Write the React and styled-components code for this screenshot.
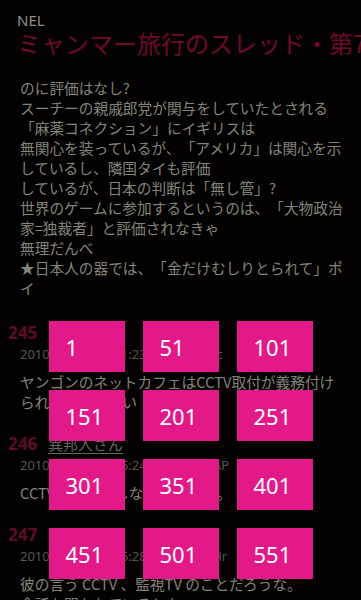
import React from "react";
import styled, { createGlobalStyle } from "styled-components";

const Global = createGlobalStyle`
  html, body { margin: 0; padding: 0; background: #030102; overflow: hidden; }
  body { width: 361px; height: 600px; }
  #root { width: 361px; height: 600px; position: relative; overflow: hidden; }
`;

const Page = styled.div`
  width: 361px;
  height: 600px;
  background: #030102;
  overflow: hidden;
  font-family: "Noto Sans CJK JP", "Noto Sans", sans-serif;
  text-spacing-trim: space-all;
`;

const Header = styled.header`
  padding: 12px 0 0 17px;
  white-space: nowrap;
`;

const AppName = styled.div`
  font-family: "Noto Sans", "Open Sans", sans-serif;
  font-size: 15px;
  line-height: 16px;
  color: #8e9088;
`;

const Title = styled.h1`
  margin: 0;
  font-family: "Noto Sans CJK JP", sans-serif;
  font-weight: 400;
  font-size: 24px;
  line-height: 30px;
  color: #6f0a2e;
`;

const Body = styled.div`
  margin: ${(p) => p.$top || 0}px 0 0 20px;
  font-size: 14.7px;
  line-height: 20px;
  color: #83857a;
`;

const Line = styled.div`
  white-space: nowrap;
`;

const Post = styled.section`
  margin-top: ${(p) => p.$top}px;
`;

const PostHead = styled.div`
  display: flex;
  align-items: center;
  height: 22px;
  white-space: nowrap;
`;

const PostNum = styled.span`
  width: 48px;
  padding-left: 8px;
  box-sizing: border-box;
  font-family: "Noto Sans", sans-serif;
  font-weight: 700;
  font-size: 17px;
  color: #5e0b29;
`;

const Name = styled.span`
  font-size: 15px;
  color: #66665f;
  text-decoration: ${(p) => (p.$underline ? "underline" : "none")};
  text-underline-offset: 3px;
`;

const DateLine = styled.div`
  margin: 1px 0 0 20px;
  font-family: "Noto Sans", "Noto Sans CJK JP", sans-serif;
  font-size: 13px;
  line-height: 20px;
  color: #56574f;
  white-space: nowrap;
`;

const Overlay = styled.div`
  position: absolute;
  inset: 0;
  display: flex;
  flex-direction: column;
  justify-content: flex-end;
  align-items: center;
  padding-bottom: 21px;
  box-sizing: border-box;
`;

const Grid = styled.div`
  display: grid;
  grid-template-columns: repeat(3, 76px);
  grid-auto-rows: 51px;
  column-gap: 18px;
  row-gap: 18px;
`;

const Tile = styled.div`
  background: #e3198a;
  color: #ffffff;
  font-family: "Noto Sans", "Open Sans", sans-serif;
  font-size: 22px;
  line-height: 22px;
  padding: 15px 0 0 17px;
  box-sizing: border-box;
`;

const intro = [
  "のに評価はなし?",
  "スーチーの親戚郎党が関与をしていたとされる",
  "「麻薬コネクション」にイギリスは",
  "無関心を装っているが、「アメリカ」は関心を示",
  "しているし、隣国タイも評価",
  "しているが、日本の判断は「無し管」?",
  "世界のゲームに参加するというのは、「大物政治",
  "家=独裁者」と評価されなきゃ",
  "無理だんべ",
  "★日本人の器では、「金だけむしりとられて」ポ",
  "イ",
];

const posts = [
  {
    num: 245,
    name: "名無しさん",
    underline: false,
    date: "2010/06/04(金) 01:23:31 ID:Zq5Kc",
    lines: ["ヤンゴンのネットカフェはCCTV取付が義務付け", "られているらしい"],
    top: 23,
  },
  {
    num: 246,
    name: "異邦人さん",
    underline: true,
    date: "2010/06/04(金) 06:24:10 ID:Mb0AP",
    lines: ["CCTVの設置はしなきゃならん。"],
    top: 20,
  },
  {
    num: 247,
    name: "名無しさん",
    underline: false,
    date: "2010/06/04(金) 06:28:52 ID:Wk9Hr",
    lines: ["彼の言う CCTV 、監視TV のことだろうな。", "会話も聞かれているとか"],
    top: 20,
  },
];

const pages = [1, 51, 101, 151, 201, 251, 301, 351, 401, 451, 501, 551];

export default function App() {
  return (
    <>
      <Global />
      <Page>
        <Header>
          <AppName>NEL</AppName>
          <Title>ミャンマー旅行のスレッド・第7部</Title>
        </Header>
        <Body $top={20}>
          {intro.map((l, i) => (
            <Line key={i}>{l}</Line>
          ))}
        </Body>
        {posts.map((p) => (
          <Post key={p.num} $top={p.top}>
            <PostHead>
              <PostNum>{p.num}</PostNum>
              <Name $underline={p.underline}>{p.name}</Name>
            </PostHead>
            <DateLine>{p.date}</DateLine>
            <Body $top={8}>
              {p.lines.map((l, i) => (
                <Line key={i}>{l}</Line>
              ))}
            </Body>
          </Post>
        ))}
      </Page>
      <Overlay>
        <Grid>
          {pages.map((n) => (
            <Tile key={n}>{n}</Tile>
          ))}
        </Grid>
      </Overlay>
    </>
  );
}
